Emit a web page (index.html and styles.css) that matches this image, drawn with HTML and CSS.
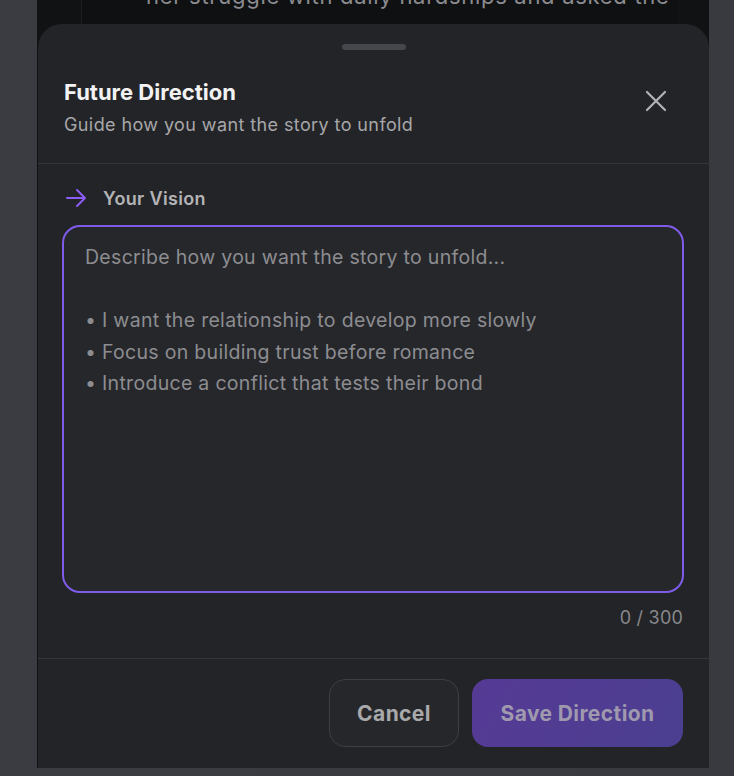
FILE: index.html
```html
<!DOCTYPE html>
<html lang="en">
<head>
<meta charset="utf-8">
<title>Future Direction</title>
<link rel="stylesheet" href="styles.css">
</head>
<body>
<div class="frame">
  <div class="bg-card">
    <p class="bg-text">her struggle with daily hardships and asked the</p>
  </div>
  <section class="sheet">
    <div class="handle"></div>
    <header class="sheet-header">
      <div class="titles">
        <h2 class="title">Future Direction</h2>
        <p class="subtitle">Guide how you want the story to unfold</p>
      </div>
      <button class="close" aria-label="Close">
        <svg width="24" height="24" viewBox="0 0 24 24" fill="none" stroke="currentColor" stroke-width="2.2" stroke-linecap="round"><path d="M3 3L21 21M21 3L3 21"/></svg>
      </button>
    </header>
    <div class="sheet-body">
      <div class="label">
        <svg class="arrow" width="22" height="22" viewBox="0 0 22 22" fill="none" stroke="currentColor" stroke-width="2" stroke-linecap="round" stroke-linejoin="round"><path d="M2 11H20M12 3L20 11L12 19"/></svg>
        <span>Your Vision</span>
      </div>
      <textarea class="vision" autofocus placeholder="Describe how you want the story to unfold...&#10;&#10;• I want the relationship to develop more slowly&#10;• Focus on building trust before romance&#10;• Introduce a conflict that tests their bond"></textarea>
      <div class="counter">0 / 300</div>
    </div>
    <footer class="sheet-footer">
      <button class="btn btn-cancel">Cancel</button>
      <button class="btn btn-save">Save Direction</button>
    </footer>
  </section>
</div>
</body>
</html>
```
FILE: styles.css
```css
* { box-sizing: border-box; }
html, body { margin: 0; padding: 0; }
body {
  width: 734px;
  height: 776px;
  overflow: hidden;
  background: linear-gradient(90deg, #3b3c42 0%, #393a40 100%);
  font-family: "Inter", "Liberation Sans", sans-serif;
}
.frame {
  margin: 0 25px 0 37px;
  height: 768px;
  background: #111214;
  display: flex;
  flex-direction: column;
  overflow: hidden;
}
.bg-card {
  height: 24px;
  flex: none;
  margin-left: 44px;
  width: 596px;
  border-left: 1px solid #1d1e21;
  background: #0f1012;
  overflow: hidden;
}
.bg-text {
  margin: -19px 0 0 64px;
  font-size: 22px;
  line-height: 30px;
  letter-spacing: 0.7px;
  color: #8b8c90;
  white-space: nowrap;
}
.sheet {
  flex: 1;
  margin-left: 1px;
  background: #232427;
  border-radius: 24px 24px 0 0;
  display: flex;
  flex-direction: column;
}
.handle {
  width: 64px;
  height: 6px;
  border-radius: 3px;
  background: #46474c;
  margin: 20px auto 0;
}
.sheet-header {
  display: flex;
  justify-content: space-between;
  align-items: flex-start;
  padding: 28px 41px 26px 26px;
  border-bottom: 1px solid #35363a;
}
.title {
  margin: 0;
  font-size: 22px;
  line-height: 28px;
  font-weight: 700;
  color: #f2f2f3;
}
.subtitle {
  margin: 7px 0 0;
  font-size: 18px;
  line-height: 24px;
  letter-spacing: 0.4px;
  color: #a7a7aa;
}
.close {
  margin-top: 11px;
  width: 24px;
  height: 24px;
  padding: 0;
  border: 0;
  background: none;
  color: #b3b3b6;
  display: flex;
}
.sheet-body {
  padding: 22px 24px 29px;
  border-bottom: 1px solid #35363a;
  display: flex;
  flex-direction: column;
}
.label {
  display: flex;
  align-items: center;
  gap: 16px;
  height: 24px;
  padding-left: 3px;
  font-size: 18px;
  letter-spacing: 0.35px;
  font-weight: 600;
  color: #b4b4b7;
}
.arrow { color: #8b5cf6; }
.vision {
  margin-top: 15px;
  width: 622px;
  height: 368px;
  resize: none;
  border: 2px solid #7e5ce9;
  border-radius: 18px;
  background: #26272b;
  padding: 15px 21px;
  font-family: inherit;
  font-size: 19.5px;
  letter-spacing: 0.3px;
  line-height: 31.5px;
  color: #d0d0d3;
  caret-color: #d8d8da;
  outline: none;
}
.vision::placeholder { color: #8d8d91; }
.counter {
  margin-top: 14px;
  align-self: flex-end;
  padding-right: 2px;
  font-size: 18px;
  letter-spacing: 0.2px;
  line-height: 22px;
  color: #88888c;
}
.sheet-footer {
  display: flex;
  justify-content: flex-end;
  gap: 13px;
  padding: 20px 26px 21px;
}
.btn {
  height: 68px;
  border-radius: 16px;
  font-family: inherit;
  font-size: 21px;
  letter-spacing: 0.4px;
  font-weight: 700;
}
.btn-cancel {
  width: 130px;
  background: #26272b;
  border: 1.5px solid #3e3f44;
  color: #a9a9ac;
}
.btn-save {
  width: 211px;
  border: 0;
  background: linear-gradient(120deg, #563a95 0%, #4b3f90 100%);
  color: #9f99ae;
}
```
